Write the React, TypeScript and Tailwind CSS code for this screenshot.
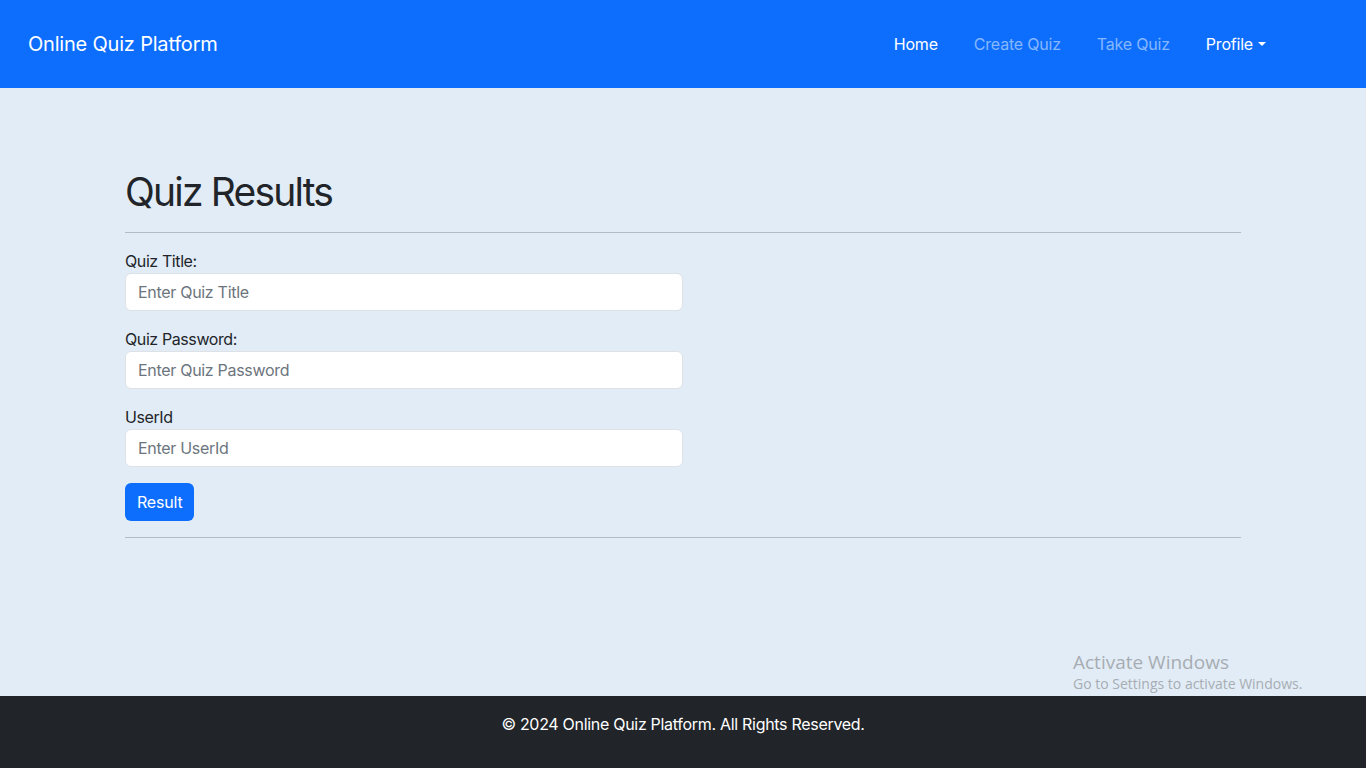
import React from "react";

export default function App() {
  const font = { fontFamily: "Inter, 'Noto Sans', sans-serif" };
  return (
    <div className="min-h-screen flex flex-col bg-[#e2ecf6] relative" style={font}>
      <nav className="h-[88px] bg-[#0d6efd] flex items-center pl-[28px] pr-[100px]">
        <span className="text-white text-[20px] tracking-[-0.2px]">Online Quiz Platform</span>
        <ul className="ml-auto flex items-center gap-9 text-[16px] tracking-[-0.2px] -mt-[1px]">
          <li className="text-white">Home</li>
          <li className="text-[#86b7fe]">Create Quiz</li>
          <li className="text-[#86b7fe]">Take Quiz</li>
          <li className="text-white flex items-center">
            Profile
            <span className="ml-[5px] inline-block w-0 h-0 border-l-[4px] border-r-[4px] border-t-[4px] border-l-transparent border-r-transparent border-t-white" />
          </li>
        </ul>
      </nav>

      <main className="flex-1">
        <div className="w-[1116px] mx-auto pt-[80px]">
          <h1 className="text-[39px] leading-[48px] text-[#212529] tracking-[-1.8px] mb-2">Quiz Results</h1>
          <hr className="my-4 border-0 border-t border-[#b3bcc6]" />
          <div className="w-[558px] text-[#212529] tracking-[-0.4px]">
            <div className="mb-4">
              <label className="block text-[16px] leading-6">Quiz Title:</label>
              <input
                className="block w-full h-[38px] px-3 rounded-[6px] border border-[#dee2e6] bg-white text-[16px] tracking-[-0.3px] placeholder:text-[#6c757d] outline-none"
                placeholder="Enter Quiz Title"
              />
            </div>
            <div className="mb-4">
              <label className="block text-[16px] leading-6">Quiz Password:</label>
              <input
                className="block w-full h-[38px] px-3 rounded-[6px] border border-[#dee2e6] bg-white text-[16px] tracking-[-0.3px] placeholder:text-[#6c757d] outline-none"
                placeholder="Enter Quiz Password"
              />
            </div>
            <div className="mb-4">
              <label className="block text-[16px] leading-6">UserId</label>
              <input
                className="block w-full h-[38px] px-3 rounded-[6px] border border-[#dee2e6] bg-white text-[16px] tracking-[-0.3px] placeholder:text-[#6c757d] outline-none"
                placeholder="Enter UserId"
              />
            </div>
            <button className="h-[38px] px-3 rounded-[6px] bg-[#0d6efd] text-white text-[16px] tracking-[-0.2px]">Result</button>
          </div>
          <hr className="my-4 border-0 border-t border-[#b3bcc6]" />
        </div>
      </main>

      <footer className="h-[72px] bg-[#212529] flex justify-center pt-4">
        <p className="text-white text-[16px] leading-6 tracking-[-0.3px]">© 2024 Online Quiz Platform. All Rights Reserved.</p>
      </footer>

      <div className="absolute left-[1073px] top-[650px] text-[#a7adb3] pointer-events-none" style={{ fontFamily: "'Open Sans', sans-serif" }}>
        <div className="text-[19px] leading-[24px]">Activate Windows</div>
        <div className="text-[14px] leading-[20px]">Go to Settings to activate Windows.</div>
      </div>
    </div>
  );
}
